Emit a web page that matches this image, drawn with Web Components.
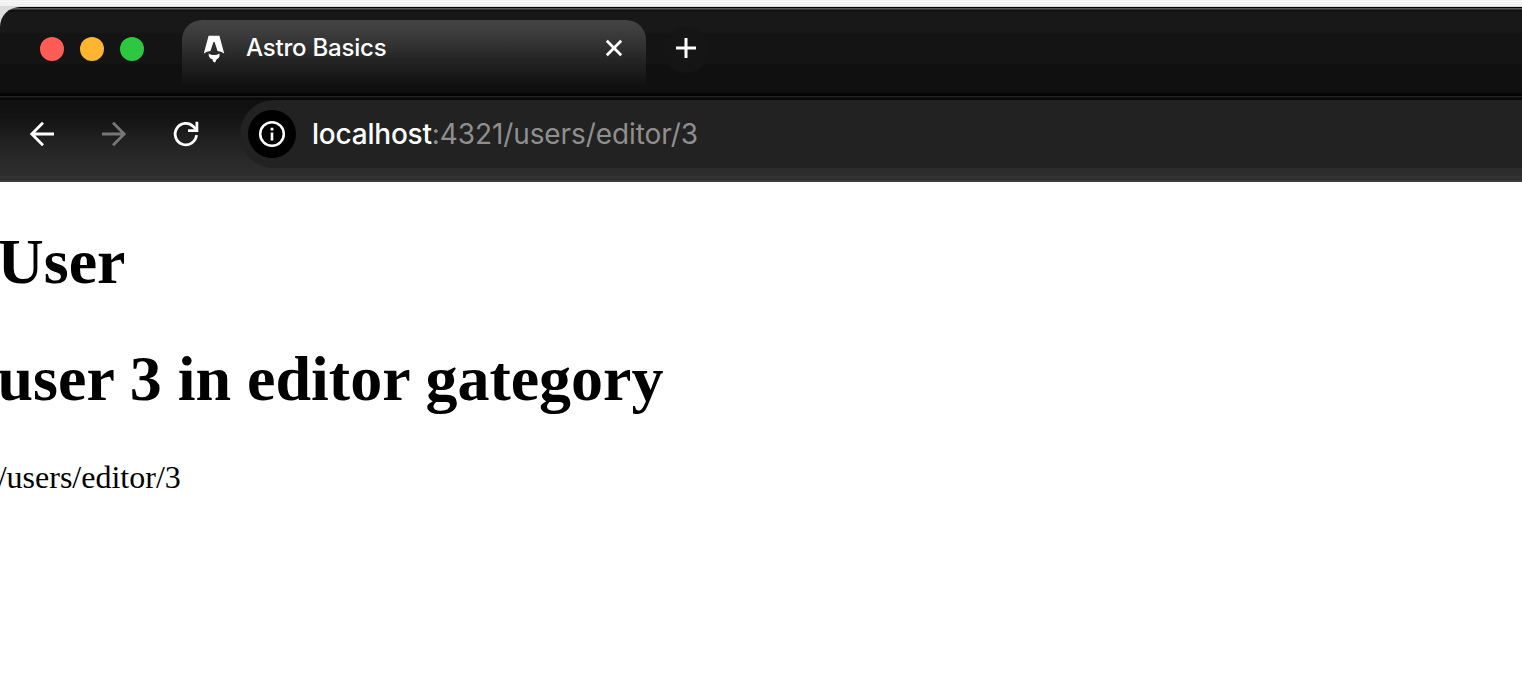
<!DOCTYPE html>
<html lang="en">
<head>
<meta charset="utf-8">
<title>Astro Basics</title>
<style>
html,body{margin:0;height:100%;overflow:hidden;background:#fff}
</style>
</head>
<body>
<browser-window>
  <tab-strip slot="tabs"><browser-tab>Astro Basics</browser-tab></tab-strip>
  <nav-bar slot="nav"><address-field><span slot="host">localhost</span><span slot="path">:4321/users/editor/3</span></address-field></nav-bar>
  <user-page></user-page>
</browser-window>
<script>
const define = (name, html) => customElements.define(name, class extends HTMLElement {
  constructor() {
    super();
    this.attachShadow({ mode: 'open' }).innerHTML = html;
  }
});

define('browser-window', `<style>
:host{display:flex;flex-direction:column;height:674px;background:#fff}
.desktop{background:linear-gradient(#f0f0f0 0 1px,#fbfbfb 1px 2px,#ededed 2px 3px,#f8f8f8 3px 4px,#ebebeb 4px 5px,#f5f5f5 5px 6px,#d8dada 6px 7px);height:7px;flex:none}
.chrome{flex:none;background:#dcdcdc}
</style><div class="desktop"></div><div class="chrome"><slot name="tabs"></slot><slot name="nav"></slot></div><slot></slot>`);

define('tab-strip', `<style>
:host{display:flex;box-sizing:border-box;height:93px;border-radius:20px 0 0 0;
 padding:13px 0 0 40px;
 background:linear-gradient(#000 0 1px,#555 1px 2px,#363636 2px 3px,#111 3px 5px,#181818 5px 25px,#141414 27px 56px,#101010 58px 84px,#0c0c0c 86px,#030303 87px 89px,#242424 89px 90px,#131313 90px 91px,#080808 91px 93px)}
.lights{display:flex;gap:16px;padding-top:17px;width:142px}
i{width:24px;height:24px;border-radius:50%}
.red{background:#ff5c56}.amber{background:#ffb52f}.green{background:#2bc840}
.new{margin:7px 0 0 17px;width:46px;height:46px;border-radius:50%;background:#151515;display:grid;place-items:center;flex:none}
svg{display:block;margin-top:-4px}
</style><div class="lights"><i class="red"></i><i class="amber"></i><i class="green"></i></div>
<slot></slot>
<div class="new"><svg width="26" height="26" viewBox="0 0 26 26"><path d="M13 3v20M3 13h20" stroke="#fff" stroke-width="3" fill="none"/></svg></div>`);

define('browser-tab', `<style>
:host{display:flex;box-sizing:border-box;width:464px;height:66px;padding:0 22px 0 21px;border-radius:20px 20px 0 0;
 background:linear-gradient(#444 0,#3f3f3f 9px,#333 24px,#252525 39px,#1a1a1a 54px,#101010 66px);
 color:#fff;font:450 24px/30px Inter,sans-serif}
.logo{margin-top:15px;flex:none}
.title{margin:13px 0 0 21px;flex:1;white-space:nowrap;letter-spacing:-.2px}
.close{margin-top:18px;flex:none}
</style>
<svg class="logo" width="22" height="28" viewBox="0 0 22 28" fill="#fff"><path d="M5.6 .8h10.8L21.2 18.4q-3-1.8-6.7-2.3L11.8 7.6q-.8-1.7-1.6 0L7.5 16.1q-3.7.5-6.7 2.3z"/><path d="M5.6 18.4q2.2 1.7 5.6 1.6 3.1-.1 5.2-1.6 1 3.5-2.2 5.5-1.3.9-1.5 2.6-.7 1.2-1.7.8-1.6-.8-1.5-3-3.9-.8-3.9-5.9z"/></svg>
<span class="title"><slot></slot></span>
<svg class="close" width="20" height="20" viewBox="0 0 20 20"><path d="M2.8 2.8l14.4 14.4M17.2 2.8L2.8 17.2" stroke="#fff" stroke-width="2.8" fill="none"/></svg>`);

define('nav-bar', `<style>
:host{display:flex;box-sizing:border-box;height:82px;padding-left:28px;
 background:linear-gradient(#101010 0 6px,#171717 24px,#222 43px,#2a2a2a 62px,#2d2d2d 76px,#353535 77px,#2b2b2b 79px,#3d3d3d 81px)}
.buttons{display:flex;gap:44px;padding-top:20px;width:212px;flex:none}
svg{display:block;flex:none;fill:none;stroke:#fff;stroke-width:2.8}
.off{stroke:#777}
</style><div class="buttons">
<svg width="28" height="28" viewBox="0 0 28 28"><path d="M26 14H4M15 2.8L3.8 14 15 25.2"/></svg>
<svg class="off" width="28" height="28" viewBox="0 0 28 28"><path d="M2 14h22M13 2.8L24.2 14 13 25.2"/></svg>
<svg width="28" height="28" viewBox="0 0 28 28" stroke-width="3"><path d="M24.5 15.2A10.7 10.7 0 1 1 21.3 6.4L24.7 9.8"/><path d="M24.9 1.8v8.9H16"/></svg>
</div><slot></slot>`);

define('address-field', `<style>
:host{display:flex;box-sizing:border-box;flex:1;height:68px;border-radius:34px 0 0 34px;background:#222;padding:10px 0 0 8px;font:450 28px/34px Inter,sans-serif;color:#fff}
.info{width:48px;height:48px;border-radius:50%;background:#000;display:grid;place-items:center;flex:none}
.url{padding:7px 0 0 16px;white-space:nowrap;letter-spacing:-.22px}
.path{color:#8f8f8f;font-weight:400;letter-spacing:-.09px}
</style><div class="info"><svg width="28" height="28" viewBox="0 0 28 28" fill="#fff"><circle cx="14" cy="14" r="11.8" fill="none" stroke="#fff" stroke-width="2.5"/><path d="M12.7 12.5h2.6v8h-2.6zM12.6 7.8h2.8v2.7h-2.8z"/></svg></div>
<div class="url"><slot name="host"></slot><span class="path"><slot name="path"></slot></span></div>`);

define('user-page', `<style>
:host{display:block;flex:1;background:#fff;color:#000;font:32px/37px "Liberation Serif",serif;padding-top:43px}
h1{font-size:64px;line-height:74px;margin:0 0 43px -2.5px;white-space:nowrap}
p{margin:0 0 0 -2.3px}
</style><h1>User</h1><h1>user 3 in editor gategory</h1><p>/users/editor/3</p>`);
</script>
</body>
</html>
